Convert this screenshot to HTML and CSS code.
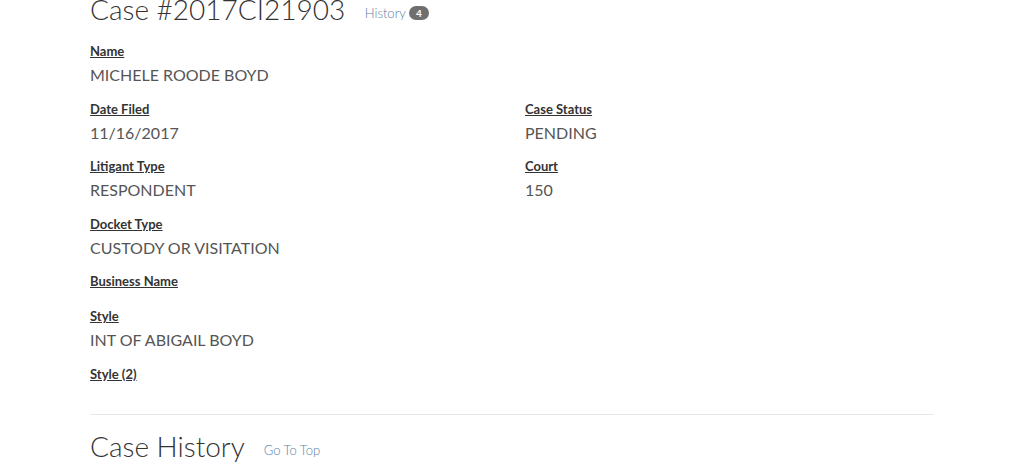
FILE: index.html
```html
<!DOCTYPE html>
<html lang="en">
<head>
  <meta charset="UTF-8" />
  <meta name="viewport" content="width=device-width, initial-scale=1.0" />
  <title>Case #2017CI21903</title>
  <link rel="stylesheet" href="styles.css">
</head>
<body>
  <div class="case-page">
    <h1 class="case-title">
      Case #2017CI21903
      <a href="#history" class="title-link">History <span class="badge">4</span></a>
    </h1>

    <div class="field-row">
      <div class="field">
        <div class="field-label">Name</div>
        <div class="field-value">MICHELE ROODE BOYD</div>
      </div>
    </div>

    <div class="field-row">
      <div class="field">
        <div class="field-label">Date Filed</div>
        <div class="field-value">11/16/2017</div>
      </div>
      <div class="field">
        <div class="field-label">Case Status</div>
        <div class="field-value">PENDING</div>
      </div>
    </div>

    <div class="field-row">
      <div class="field">
        <div class="field-label">Litigant Type</div>
        <div class="field-value">RESPONDENT</div>
      </div>
      <div class="field">
        <div class="field-label">Court</div>
        <div class="field-value">150</div>
      </div>
    </div>

    <div class="field-row">
      <div class="field">
        <div class="field-label">Docket Type</div>
        <div class="field-value">CUSTODY OR VISITATION</div>
      </div>
    </div>

    <div class="field-row">
      <div class="field">
        <div class="field-label">Business Name</div>
        <div class="field-value"></div>
      </div>
    </div>

    <div class="field-row">
      <div class="field">
        <div class="field-label">Style</div>
        <div class="field-value">INT OF ABIGAIL BOYD</div>
      </div>
    </div>

    <div class="field-row">
      <div class="field">
        <div class="field-label">Style (2)</div>
        <div class="field-value"></div>
      </div>
    </div>

    <hr class="divider">

    <h2 class="case-title" id="history">
      Case History
      <a href="#" class="title-link">Go To Top</a>
    </h2>
  </div>
</body>
</html>
```

FILE: styles.css
```css
body {
  font-family: Lato, 'Liberation Sans', sans-serif;
  background-color: #fff;
  color: #444;
  margin: 0;
  padding: 0;
}

.case-page {
  width: 844px;
  margin: -9px auto 0;
}

.case-title {
  font-size: 28px;
  font-weight: 300;
  color: #333;
  line-height: 36px;
  margin: 0 0 10px;
}

h2.case-title {
  margin-top: 13px;
}

.title-link {
  font-size: 13px;
  color: #5a80a8;
  text-decoration: none;
  margin-left: 12px;
  vertical-align: middle;
}

.badge {
  display: inline-block;
  background-color: #6f6f6f;
  color: white;
  font-size: 10px;
  font-weight: bold;
  line-height: 14px;
  padding: 0 7px;
  border-radius: 7px;
  vertical-align: 1px;
}

.field-row {
  display: grid;
  grid-template-columns: 1fr 1fr;
  column-gap: 26px;
}

.field {
  margin-bottom: 12px;
}

.field-label {
  font-size: 13px;
  font-weight: bold;
  color: #333;
  text-decoration: underline;
  line-height: 21px;
  margin-bottom: 2px;
}

.field-value {
  font-size: 16px;
  line-height: 22.5px;
  color: #555;
}

.divider {
  border: 0;
  border-top: 1px solid #e8e8e8;
  margin: 15px 0 0;
}
```
